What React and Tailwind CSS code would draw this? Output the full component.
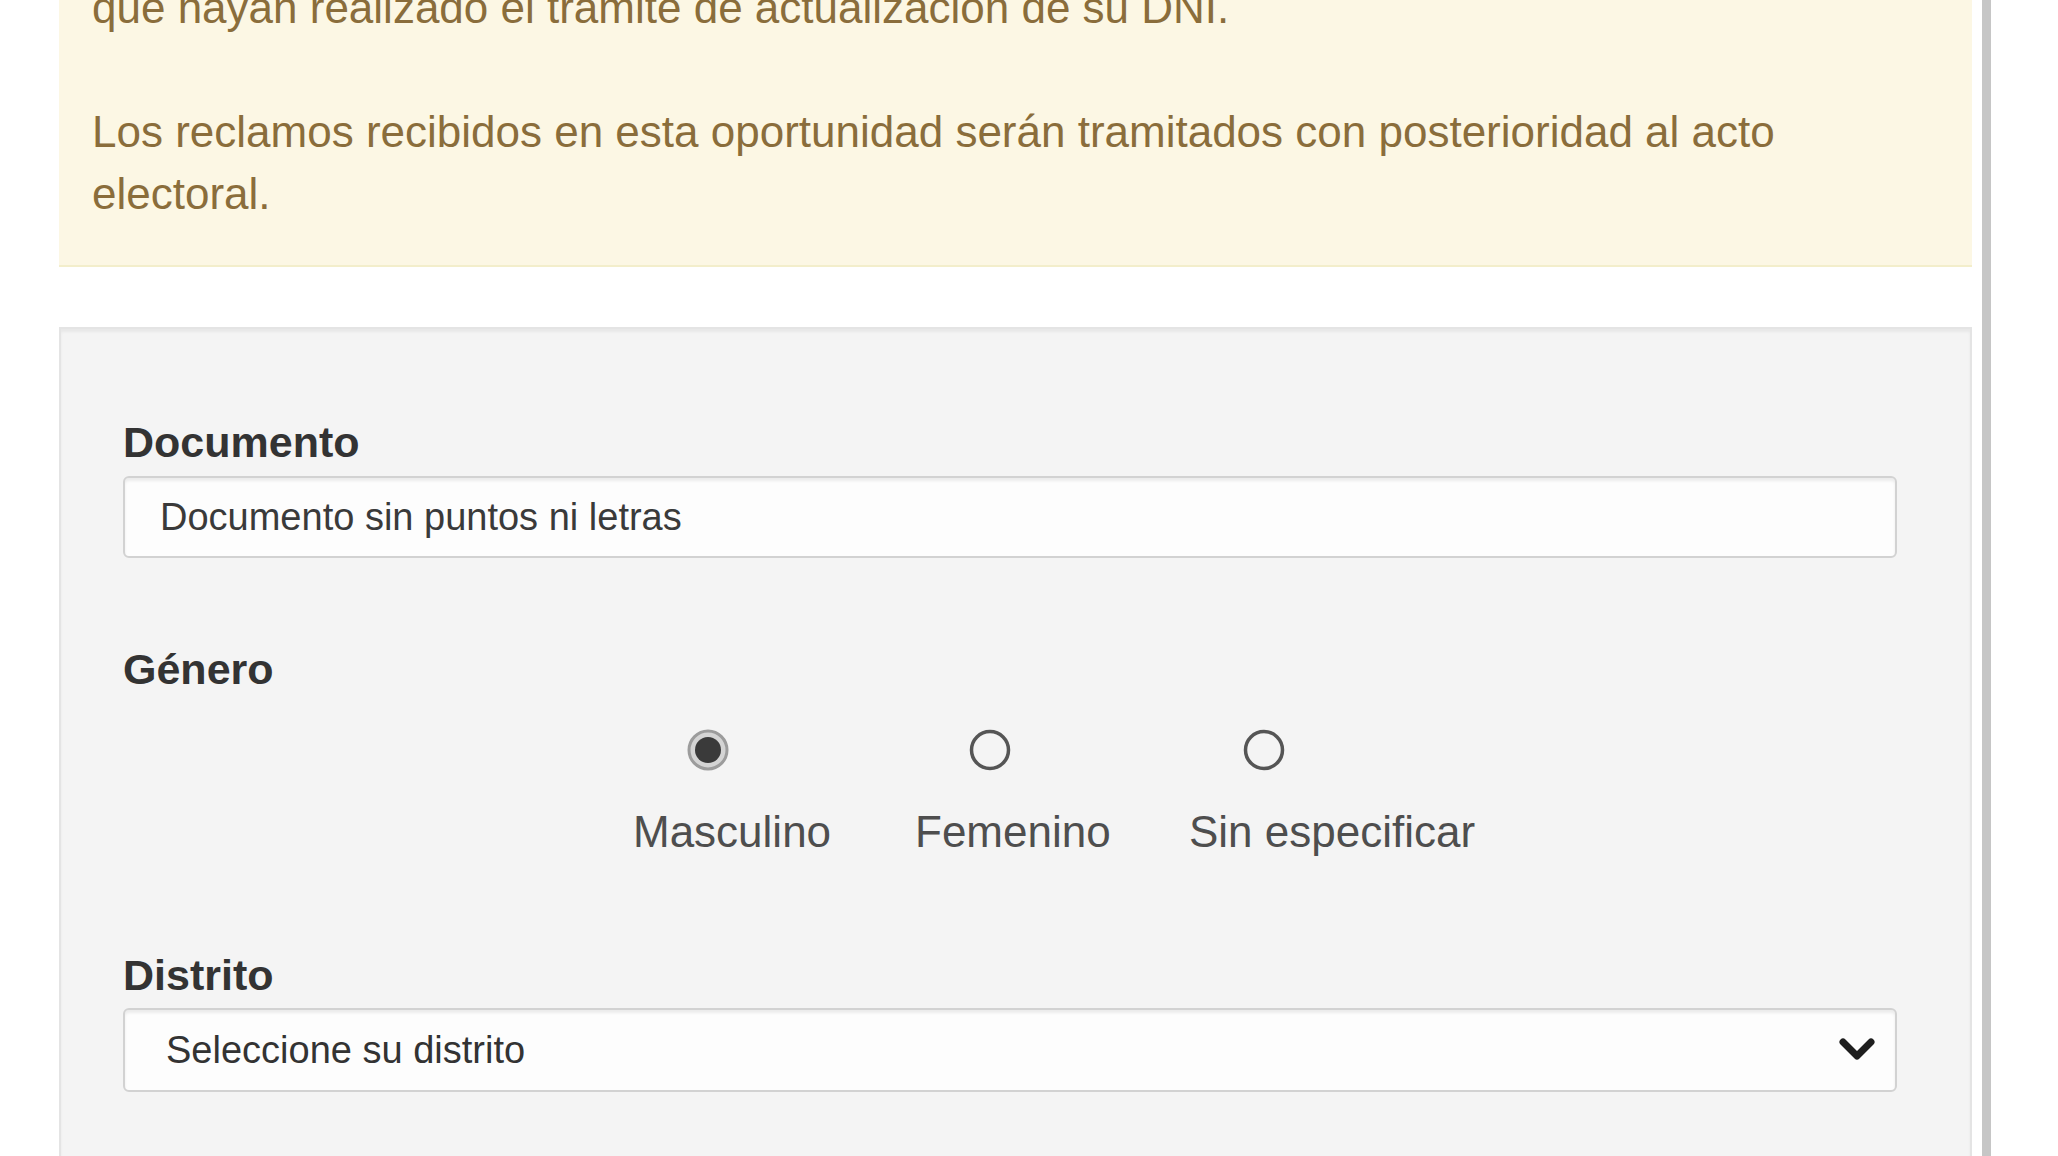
import React from "react";

const sans = { fontFamily: '"Liberation Sans", Arial, sans-serif' };

function Radio({ checked }) {
  return (
    <svg width="42" height="42" viewBox="0 0 42 42" className="block">
      {checked ? (
        <>
          <circle cx="21" cy="21" r="19" fill="#d4d4d4" stroke="#9c9c9c" strokeWidth="3" />
          <circle cx="21" cy="21" r="13" fill="#3a3a3a" />
        </>
      ) : (
        <circle cx="21" cy="21" r="18.5" fill="none" stroke="#555555" strokeWidth="3.5" />
      )}
    </svg>
  );
}

function Option({ label, checked, width }) {
  return (
    <label className={`flex flex-col items-start ${width}`}>
      <span className="ml-[54px]">
        <Radio checked={checked} />
      </span>
      <span className="mt-[36px] text-[44px] leading-[50px] text-[#4e4e4e] whitespace-nowrap">{label}</span>
    </label>
  );
}

export default function App() {
  return (
    <div className="h-[1156px] overflow-hidden bg-white pl-[59px]" style={sans}>
      <div className="flex h-full w-[1932px] flex-col border-r-[9px] border-[#c6c6c6] bg-white pr-[10px]">
        {/* aviso */}
        <div className="-mt-[23px] shrink-0 border-b-2 border-[#f3eecb] bg-[#fcf7e4] pb-[40px] pl-[33px] pr-[43px] text-[44px] leading-[62px] text-[#8a6d3b]">
          <p>que hayan realizado el trámite de actualización de su DNI.</p>
          <p className="mt-[62px]">
            Los reclamos recibidos en esta oportunidad serán tramitados con posterioridad al acto
            <br />
            electoral.
          </p>
        </div>

        {/* formulario */}
        <div className="mt-[60px] h-[900px] shrink-0 border-2 border-[#e4e4e4] bg-[#f4f4f4] pl-[62px] pr-[73px] pt-[89px] shadow-[inset_0_3px_3px_rgba(0,0,0,0.05)]">
          <div className="text-[43px] font-bold leading-[49px] text-[#333]">Documento</div>
          <input
            type="text"
            placeholder="Documento sin puntos ni letras"
            className="mt-[9px] block h-[82px] w-full rounded-[6px] border-2 border-[#d2d2d2] bg-[#fdfdfd] pl-[35px] text-[38px] text-[#333] shadow-[inset_0_3px_3px_rgba(0,0,0,0.07)] outline-none placeholder:text-[#3a3a3a]"
            style={sans}
          />

          <div className="mt-[87px] text-[43px] font-bold leading-[49px] text-[#333]">Género</div>
          <div className="ml-[510px] mt-[35px] flex">
            <Option label="Masculino" checked width="w-[282px]" />
            <Option label="Femenino" width="w-[274px]" />
            <Option label="Sin especificar" width="w-auto" />
          </div>

          <div className="mt-[94px] text-[43px] font-bold leading-[49px] text-[#333]">Distrito</div>
          <div className="mt-[8px] flex h-[84px] w-full items-center justify-between rounded-[6px] border-2 border-[#d2d2d2] bg-[#fdfdfd] pl-[41px] pr-[19px] shadow-[inset_0_3px_3px_rgba(0,0,0,0.07)]">
            <span className="text-[38px] text-[#333]">Seleccione su distrito</span>
            <svg width="38" height="28" viewBox="0 0 38 28">
              <polyline points="5,6 19,20 33,6" fill="none" stroke="#1e1e1e" strokeWidth="7" strokeLinecap="round" strokeLinejoin="round" />
            </svg>
          </div>
        </div>
      </div>
    </div>
  );
}
